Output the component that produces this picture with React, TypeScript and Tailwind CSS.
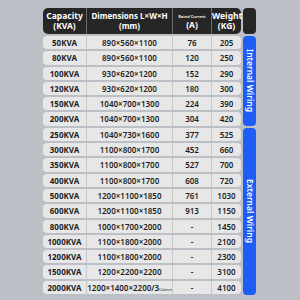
import React from "react";

const rows = [
  ["50KVA", "890×560×1100", "76", "205"],
  ["80KVA", "890×560×1100", "120", "250"],
  ["100KVA", "930×620×1200", "152", "290"],
  ["120KVA", "930×620×1200", "180", "300"],
  ["150KVA", "1040×700×1300", "224", "390"],
  ["200KVA", "1040×700×1300", "304", "420"],
  ["250KVA", "1040×730×1600", "377", "525"],
  ["300KVA", "1100×800×1700", "452", "660"],
  ["350KVA", "1100×800×1700", "527", "700"],
  ["400KVA", "1100×800×1700", "608", "720"],
  ["500KVA", "1200×1100×1850", "761", "1030"],
  ["600KVA", "1200×1100×1850", "913", "1150"],
  ["800KVA", "1000×1700×2000", "-", "1450"],
  ["1000KVA", "1100×1800×2000", "-", "2100"],
  ["1200KVA", "1100×1800×2000", "-", "2300"],
  ["1500KVA", "1200×2200×2200", "-", "3100"],
  ["2000KVA", "1200×1400×2200/3", "-", "4100"],
];

const cols = "grid grid-cols-[43px_86px_39px_30px]";

export default function App() {
  return (
    <div
      className="w-[300px] h-[300px] bg-[#bcbfc6] pl-[43px] pt-[8px] overflow-hidden"
      style={{ fontFamily: '"Noto Sans", "Open Sans", sans-serif' }}
    >
      <div className="flex gap-[2px]">
        {/* table */}
        <div className="w-[198px] flex flex-col gap-[2px]">
          <div className={`${cols} h-[26px] bg-[#262626] rounded-[5px] text-white font-bold text-center`}>
            <div className="flex flex-col justify-center text-[8.5px] leading-[10px]">
              <span>Capacity</span>
              <span>(KVA)</span>
            </div>
            <div className="flex flex-col justify-center border-l border-[#6b6b6b] text-[8px] leading-[10px] whitespace-nowrap">
              <span>Dimensions L×W×H</span>
              <span>(mm)</span>
            </div>
            <div className="flex flex-col justify-center border-l border-[#6b6b6b]">
              <span className="text-[4px] leading-[7px] font-semibold whitespace-nowrap">Rated Current</span>
              <span className="text-[8.5px] leading-[10px]">(A)</span>
            </div>
            <div className="flex flex-col justify-center border-l border-[#6b6b6b] text-[8.5px] leading-[10px]">
              <span>Weight</span>
              <span>(KG)</span>
            </div>
          </div>
          <div className="flex flex-col gap-[2px]">
            {rows.map((r, i) => (
              <div
                key={i}
                className={`${cols} h-[13.3px] bg-[#e7e7e7] rounded-[4px] text-[8px] font-bold text-[#1e1e1e] text-center leading-[13.3px]`}
              >
                <div>{r[0]}</div>
                <div className="border-l border-[#c6c6c6] whitespace-nowrap font-semibold">
                  {r[1]}
                  {i === rows.length - 1 && (
                    <span className="text-[3.5px] font-normal">Cabinet</span>
                  )}
                </div>
                <div className="border-l border-[#c6c6c6] font-semibold">{r[2]}</div>
                <div className="border-l border-[#c6c6c6] font-semibold">{r[3]}</div>
              </div>
            ))}
          </div>
        </div>

        {/* side labels */}
        <div className="w-[13px] flex flex-col gap-[2px]">
          <div className="h-[26px] bg-[#262626] rounded-[4px]" />
          <div className="h-[89.5px] bg-[#1d5cf5] rounded-[4px] flex items-center justify-center">
            <span className="[writing-mode:vertical-rl] text-white text-[8.5px] font-semibold whitespace-nowrap leading-none">
              Internal Wiring
            </span>
          </div>
          <div className="h-[167.5px] bg-[#1d5cf5] rounded-[4px] flex items-center justify-center">
            <span className="[writing-mode:vertical-rl] text-white text-[8.5px] font-semibold whitespace-nowrap leading-none">
              External Wiring
            </span>
          </div>
        </div>
      </div>
    </div>
  );
}
